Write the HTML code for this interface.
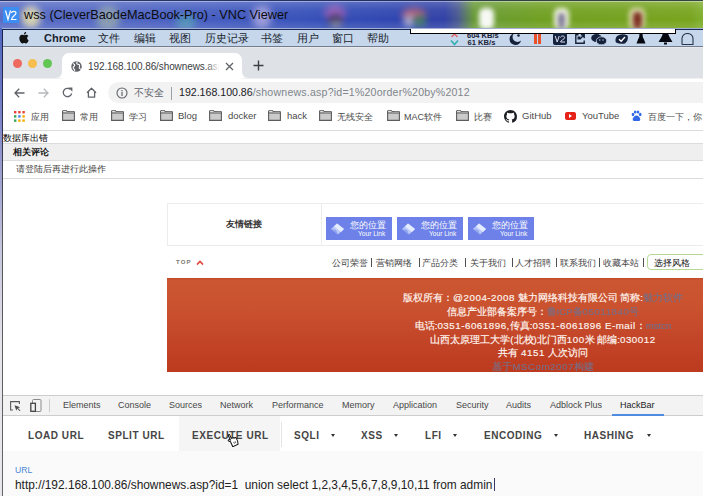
<!DOCTYPE html>
<html><head><meta charset="utf-8">
<style>
*{margin:0;padding:0;box-sizing:border-box}
html,body{width:703px;height:496px;overflow:hidden;background:#fff;font-family:"Liberation Sans",sans-serif}
div,span{white-space:nowrap}
.a{position:absolute}
#title{position:absolute;left:0;top:0;width:703px;height:28px;overflow:hidden;
 background:linear-gradient(90deg,#586cc6 0px,#5066c2 120px,#445cc0 220px,#3650b8 320px,#3046b0 400px,#3242a6 445px,#4a5a90 458px,#689a36 474px,#70a022 540px,#78a41e 690px,#80b030 703px)}
#title .hl{position:absolute;left:0;top:0;width:703px;height:28px;background:linear-gradient(180deg,rgba(255,255,255,.22) 0,rgba(255,255,255,.06) 35%,rgba(0,0,0,0) 70%,rgba(255,255,255,.12) 100%)}
.blob{position:absolute;border-radius:50%;filter:blur(3.5px)}
.menu{position:absolute;top:32px;font-size:10.5px;color:#1a1f2e}
.tl{position:absolute;width:9px;height:9px;border-radius:50%;top:59px}
.bm{position:absolute;top:110.4px;font-size:9.5px;color:#4a4a4a}
.bmc{position:absolute;top:111px;font-size:9px;color:#4a4a4a}
.fs{position:absolute;top:110px}
.fold{position:absolute;top:112px;width:12px;height:9px;border:1px solid #5e5e5e;border-radius:1px;background:#cfcfcf}
.fold:before{content:"";position:absolute;left:-1px;top:-3px;width:5px;height:3px;border:1px solid #5e5e5e;border-bottom:none;border-radius:1px 1px 0 0;background:#cfcfcf}
.fold:after{content:"";position:absolute;left:0;top:0;width:10px;height:1.5px;background:#eee}
.nav{position:absolute;top:257px;font-size:9px;color:#444}
.sep{position:absolute;top:258px;width:1px;height:9px;background:#505050}
.ft{position:absolute;font-size:9.6px;color:#fff6f0;font-weight:normal;letter-spacing:0px;-webkit-text-stroke-width:.18px}
.d{letter-spacing:.5px;font-weight:normal;font-size:9.8px;-webkit-text-stroke-width:.15px}
.g{color:#7a6e84;filter:blur(.7px)}
.dt{position:absolute;top:400px;font-size:9px;color:#474747}
.hb{position:absolute;top:429.5px;font-size:10px;font-weight:bold;color:#454545;letter-spacing:.55px}
.car{position:absolute;top:434px;width:0;height:0;border-left:2.5px solid transparent;border-right:2.5px solid transparent;border-top:3px solid #333}
.lk{position:absolute;top:217px;width:66px;height:23px;background:#6d81e8}
.lk .t1{position:absolute;left:24px;top:1.8px;font-size:9px;color:#fff}
.lk .t2{position:absolute;left:32px;top:12.5px;font-size:6.6px;color:#fff}
.lk svg{position:absolute;left:4px;top:5px}
</style></head><body>

<!-- Title bar -->
<div id="title">
 <div class="blob" style="left:21px;top:6px;width:20px;height:22px;background:rgba(245,235,170,.8)"></div>
 <div class="blob" style="left:96px;top:6px;width:24px;height:24px;background:rgba(200,215,150,.45)"></div>
 <div class="blob" style="left:176px;top:14px;width:20px;height:16px;background:rgba(90,200,170,.45)"></div>
 <div class="blob" style="left:252px;top:6px;width:20px;height:22px;background:rgba(230,210,240,.55)"></div>
 <div class="blob" style="left:324px;top:5px;width:22px;height:16px;background:rgba(210,100,180,.55)"></div>
 <div class="blob" style="left:329px;top:15px;width:13px;height:12px;background:rgba(20,20,30,.7)"></div>
 <div class="blob" style="left:330px;top:20px;width:12px;height:8px;background:rgba(230,230,230,.5)"></div>
 <div class="blob" style="left:402px;top:8px;width:24px;height:12px;background:rgba(220,100,100,.7)"></div>
 <div class="blob" style="left:404px;top:15px;width:10px;height:12px;background:rgba(230,230,230,.7)"></div>
 <div class="blob" style="left:414px;top:15px;width:12px;height:12px;background:rgba(60,150,70,.7)"></div>
 <div class="blob" style="left:479px;top:8px;width:15px;height:21px;border-radius:30%;background:rgba(255,255,255,.95);filter:blur(2.5px)"></div>
 <div class="blob" style="left:554px;top:8px;width:15px;height:21px;border-radius:30%;background:rgba(245,245,235,.95);filter:blur(2.5px)"></div>
 <div class="blob" style="left:558px;top:13px;width:7px;height:16px;border-radius:30%;background:rgba(110,105,140,.85);filter:blur(2px)"></div>
 <div class="blob" style="left:629px;top:8px;width:16px;height:21px;border-radius:30%;background:rgba(235,225,190,.85);filter:blur(2.5px)"></div>
 <div class="blob" style="left:633px;top:12px;width:9px;height:17px;border-radius:30%;background:rgba(120,40,25,.95);filter:blur(2px)"></div>
 <div class="hl"></div>
 <div style="position:absolute;left:0;top:0;width:703px;height:1px;background:rgba(10,20,60,.7)"></div><div style="position:absolute;left:0;top:1px;width:703px;height:1px;background:rgba(255,255,255,.4)"></div>
 <svg style="position:absolute;left:3px;top:7px" width="16" height="16" viewBox="0 0 16 16"><rect width="16" height="16" fill="#3d8ef2"/><path d="M2.5 3.5L5 12.5 7.5 3.5M8.5 6c0-2 4.5-2.5 4.5 0 0 2.5-4.5 3-4.5 6.5h5" stroke="#fff" stroke-width="1.2" fill="none"/></svg>
 <div class="a" style="left:24px;top:7.5px;font-size:12.7px;color:#0c0c10">wss (CleverBaodeMacBook-Pro) - VNC Viewer</div>
</div>
<!-- frame -->
<div style="position:absolute;left:0;top:28px;width:2px;height:468px;background:linear-gradient(180deg,#5068c0 0,#6a78c4 60px,#9498cc 130px,#c4c4dc 220px,#e4e4ea 320px,#e8e8ec 468px)"></div>
<div style="position:absolute;left:2px;top:28px;width:1px;height:468px;background:linear-gradient(180deg,#1a2050 0,#303048 100px,#555 200px,#666 468px)"></div>
<div style="position:absolute;left:2px;top:28px;width:701px;height:1px;background:#a4b0d4"></div><div style="position:absolute;left:2px;top:29px;width:701px;height:1px;background:#1a2a58"></div>

<!-- Mac menu bar -->
<div style="position:absolute;left:3px;top:30px;width:700px;height:17px;background:#c6d7ec;border-bottom:1px solid #707c92"></div>
<svg style="position:absolute;left:19px;top:32px" width="10" height="12" viewBox="0 0 170 200"><path fill="#111" d="M150 170c-8 12-17 24-30 24s-17-8-32-8-20 8-32 8-22-13-30-25C9 145-3 100 14 70c8-15 24-24 41-24 13 0 25 9 33 9s21-10 36-9c6 0 24 2 35 19-1 1-21 12-21 37 0 29 26 39 26 39-1 1-4 14-14 29zM112 26c7-8 11-19 10-30-10 0-22 7-29 15-6 7-12 18-10 29 11 1 22-6 29-14z"/></svg>
<div class="a" style="left:44px;top:32px;font-size:11px;font-weight:bold;color:#1a1f2e">Chrome</div>
<div class="menu" style="left:98px">文件</div>
<div class="menu" style="left:134px">编辑</div>
<div class="menu" style="left:169px">视图</div>
<div class="menu" style="left:205px">历史记录</div>
<div class="menu" style="left:261px">书签</div>
<div class="menu" style="left:297px">用户</div>
<div class="menu" style="left:332px">窗口</div>
<div class="menu" style="left:367px">帮助</div>
<svg style="position:absolute;left:450px;top:32px" width="9" height="14" viewBox="0 0 9 14"><path d="M1.5 5L4.5 2 7.5 5" stroke="#e06060" stroke-width="1.3" fill="none"/><path d="M1 8.5L4.5 12.5 8 8.5" stroke="#30b0b0" stroke-width="1.6" fill="none"/></svg>
<div class="a" style="left:467px;top:31px;font-size:7.5px;font-weight:bold;color:#1a2438">604 KB/s</div>
<div class="a" style="left:467.5px;top:38px;font-size:7.6px;font-weight:bold;color:#1a2438">61 KB/s</div>
<div style="position:absolute;left:410px;top:29px;width:266px;height:4.5px;background:#fff;border:1px solid #000;border-top:none"></div>
<svg style="position:absolute;left:508px;top:33px" width="14" height="12" viewBox="0 0 14 12"><path d="M6 0.5A5.8 5.8 0 1 0 13 7.5 4.5 4.5 0 0 1 6 0.5z" fill="#15203a"/><circle cx="10.5" cy="2.5" r="1.3" fill="#15203a"/></svg>
<div style="position:absolute;left:534px;top:34px;width:2.5px;height:10px;background:#e8502a"></div>
<div style="position:absolute;left:538px;top:34px;width:2.5px;height:10px;background:#e8502a"></div>
<svg style="position:absolute;left:553px;top:33px" width="14" height="12" viewBox="0 0 14 12"><rect width="14" height="12" rx="2" fill="#15233f"/><path d="M2.2 3L4.2 9 6.2 3M7.6 4.5C7.6 2.6 11.6 2.4 11.6 4.6 11.6 6.5 7.6 7 7.6 9H12" stroke="#dde" stroke-width="1" fill="none"/></svg>
<svg style="position:absolute;left:575px;top:34px" width="10" height="10" viewBox="0 0 10 10"><path d="M3.5 0.8H0.8V9.2H9.2V6.5M5 5L9.2 0.8M5.8 0.8H9.2V4.2" stroke="#15203a" stroke-width="1.4" fill="none"/><rect x="2.5" y="2.5" width="3" height="3" fill="#15203a"/></svg>
<svg style="position:absolute;left:591px;top:34px" width="16" height="11" viewBox="0 0 16 11"><ellipse cx="5.5" cy="4" rx="5.3" ry="4" fill="#15203a"/><ellipse cx="10.5" cy="6.8" rx="5.2" ry="4" fill="#15203a" stroke="#c6d7ec" stroke-width=".8"/><circle cx="8.8" cy="6" r=".7" fill="#c6d7ec"/><circle cx="12" cy="6" r=".7" fill="#c6d7ec"/></svg>
<svg style="position:absolute;left:615px;top:34px" width="14" height="10" viewBox="0 0 14 10"><path d="M2 2Q7 -1 12.5 1.5 14 6 10 9.5Q5 10.5 1 8.5 -0.5 5 2 2z" fill="#15203a"/><path d="M4 5.3L6.2 7.3 10 3" stroke="#fff" stroke-width="1.4" fill="none"/></svg>
<svg style="position:absolute;left:636px;top:33px" width="10" height="11" viewBox="0 0 10 11"><path d="M3.5 0.5H6.5L6.8 4 8 6.5 9.5 10.5H0.5L2 6.5 3.2 4z" fill="#050810"/></svg>
<svg style="position:absolute;left:658px;top:33px" width="15" height="12" viewBox="0 0 15 12"><path d="M5 0.5H10L11.5 4 14.5 9H0.5L3.5 4z" fill="#050810"/><rect x="6" y="9.5" width="3" height="2" fill="#050810"/></svg>
<svg style="position:absolute;left:681px;top:33px" width="13" height="12" viewBox="0 0 13 12"><path d="M1 11.5V5.5A5.5 5 0 0 1 12 5.5V11.5H1" stroke="#2a3348" stroke-width="1.1" fill="none"/></svg>

<!-- Chrome tab strip -->
<div style="position:absolute;left:3px;top:47px;width:700px;height:31px;background:#dee1e6;border-top:1px solid #e9e9ec"></div>
<div class="tl" style="left:13px;background:#ee6a5f"></div>
<div class="tl" style="left:28px;background:#f5be4f"></div>
<div class="tl" style="left:43px;background:#62c655"></div>
<div style="position:absolute;left:62px;top:53px;width:180px;height:26px;background:#fff;border-radius:7px 7px 0 0"></div>
<div style="position:absolute;left:56px;top:72px;width:6px;height:7px;background:#fff"></div><div style="position:absolute;left:50px;top:66px;width:12px;height:12px;border-radius:50%;background:#dee1e6"></div>
<div style="position:absolute;left:242px;top:72px;width:6px;height:7px;background:#fff"></div><div style="position:absolute;left:242px;top:66px;width:12px;height:12px;border-radius:50%;background:#dee1e6"></div>
<svg style="position:absolute;left:71px;top:61px" width="11" height="11" viewBox="0 0 12 12"><circle cx="6" cy="6" r="5.7" fill="#5f6368"/><path d="M2.2 2.8c1.3.6 2.3 1.3 1.8 2.4s-2 .8-1.6 2.2 1.6 1.3 1.7 3.4M6.8.6c-.3 1 -.9 1.6-.4 2.4s2 .2 2.8 1.3-.5 2.2-.2 3.2 1.3 1 1.8 1.5" stroke="#fff" stroke-width="1.2" fill="none"/></svg>
<div style="position:absolute;left:88px;top:58px;width:134px;height:16px;overflow:hidden">
 <div class="a" style="left:0;top:2.5px;font-size:10px;letter-spacing:-0.1px;color:#3c4043">192.168.100.86/shownews.asp?id=1</div>
 <div style="position:absolute;left:118px;top:0;width:16px;height:16px;background:linear-gradient(90deg,rgba(255,255,255,0),#fff 85%)"></div>
</div>
<svg style="position:absolute;left:225px;top:62px" width="9" height="9" viewBox="0 0 9 9"><path d="M1 1L8 8M8 1L1 8" stroke="#5f6368" stroke-width="1.3"/></svg>
<svg style="position:absolute;left:253px;top:60px" width="11" height="11" viewBox="0 0 11 11"><path d="M5.5 0.5V10.5M0.5 5.5H10.5" stroke="#3c4043" stroke-width="1.4"/></svg>

<!-- toolbar -->
<div style="position:absolute;left:3px;top:78px;width:700px;height:53px;background:#fff;border-bottom:1px solid #dcdcdc"></div>
<svg style="position:absolute;left:14px;top:88px" width="11" height="10" viewBox="0 0 11 10"><path d="M10.5 5H1.2M5.2 0.8L1 5 5.2 9.2" stroke="#5f6368" stroke-width="1.3" fill="none"/></svg>
<svg style="position:absolute;left:38px;top:88px" width="11" height="10" viewBox="0 0 11 10"><path d="M0.5 5H9.8M5.8 0.8L10 5 5.8 9.2" stroke="#b5b8bc" stroke-width="1.3" fill="none"/></svg>
<svg style="position:absolute;left:62px;top:87px" width="11" height="11" viewBox="0 0 11 11"><path d="M9.6 6.3A4.2 4.2 0 1 1 8.2 2.3" stroke="#5f6368" stroke-width="1.3" fill="none"/><path d="M6.3 0.6H10.4V4.7z" fill="#5f6368"/></svg>
<svg style="position:absolute;left:86px;top:87px" width="11" height="11" viewBox="0 0 11 11"><path d="M1 5.8L5.5 1.2 10 5.8M2.4 4.5V10.2H8.6V4.5" stroke="#5f6368" stroke-width="1.3" fill="none" stroke-linejoin="round"/></svg>
<div style="position:absolute;left:3px;top:78px;width:59px;height:1px;background:#eef0f2"></div><div style="position:absolute;left:242px;top:78px;width:461px;height:1px;background:#eef0f2"></div><div style="position:absolute;left:108px;top:82px;width:620px;height:21px;background:#f2f2f3;border-radius:11px"></div>
<svg style="position:absolute;left:116px;top:87px" width="12" height="12" viewBox="0 0 12 12"><circle cx="6" cy="6" r="5" stroke="#5f6368" stroke-width="1.1" fill="none"/><path d="M6 5v4M6 3v1.2" stroke="#5f6368" stroke-width="1.2"/></svg>
<div class="a" style="left:134px;top:86px;font-size:10px;color:#5f6368">不安全</div>
<div style="position:absolute;left:171px;top:87px;width:1px;height:13px;background:#9aa0a6"></div>
<div class="a" style="left:179px;top:85.5px;font-size:10.6px;color:#80868b"><span style="color:#202124">192.168.100.86</span><span style="letter-spacing:.2px">/shownews.asp?id=1%20order%20by%2012</span></div>

<!-- bookmarks -->
<svg style="position:absolute;left:14px;top:111px" width="11" height="11" viewBox="0 0 11 11">
<rect x="0" y="0" width="2.4" height="2.4" fill="#e94235"/><rect x="4.2" y="0" width="2.4" height="2.4" fill="#e94235"/><rect x="8.4" y="0" width="2.4" height="2.4" fill="#e94235"/>
<rect x="0" y="4.2" width="2.4" height="2.4" fill="#34a853"/><rect x="4.2" y="4.2" width="2.4" height="2.4" fill="#4285f4"/><rect x="8.4" y="4.2" width="2.4" height="2.4" fill="#f9ab00"/>
<rect x="0" y="8.4" width="2.4" height="2.4" fill="#34a853"/><rect x="4.2" y="8.4" width="2.4" height="2.4" fill="#f9ab00"/><rect x="8.4" y="8.4" width="2.4" height="2.4" fill="#f9ab00"/>
</svg>
<div class="bmc" style="left:31px">应用</div>
<svg class="fs" style="left:62px" width="13" height="11" viewBox="0 0 13 11"><path d="M0.6 10.4V1.3Q0.6 0.6 1.3 0.6H4.2L5.2 1.6H11.7Q12.4 1.6 12.4 2.3V10.4Z" fill="#cbcbcb" stroke="#5c5c5c" stroke-width="1.1"/><path d="M1.2 1.3H4L5 2.3H11.8" stroke="#f2f2f2" stroke-width="1"/><path d="M0.6 3H12.4" stroke="#5c5c5c" stroke-width="1"/></svg><div class="bmc" style="left:80px">常用</div>
<svg class="fs" style="left:111px" width="13" height="11" viewBox="0 0 13 11"><path d="M0.6 10.4V1.3Q0.6 0.6 1.3 0.6H4.2L5.2 1.6H11.7Q12.4 1.6 12.4 2.3V10.4Z" fill="#cbcbcb" stroke="#5c5c5c" stroke-width="1.1"/><path d="M1.2 1.3H4L5 2.3H11.8" stroke="#f2f2f2" stroke-width="1"/><path d="M0.6 3H12.4" stroke="#5c5c5c" stroke-width="1"/></svg><div class="bmc" style="left:129px">学习</div>
<svg class="fs" style="left:160px" width="13" height="11" viewBox="0 0 13 11"><path d="M0.6 10.4V1.3Q0.6 0.6 1.3 0.6H4.2L5.2 1.6H11.7Q12.4 1.6 12.4 2.3V10.4Z" fill="#cbcbcb" stroke="#5c5c5c" stroke-width="1.1"/><path d="M1.2 1.3H4L5 2.3H11.8" stroke="#f2f2f2" stroke-width="1"/><path d="M0.6 3H12.4" stroke="#5c5c5c" stroke-width="1"/></svg><div class="bm" style="left:178px">Blog</div>
<svg class="fs" style="left:209px" width="13" height="11" viewBox="0 0 13 11"><path d="M0.6 10.4V1.3Q0.6 0.6 1.3 0.6H4.2L5.2 1.6H11.7Q12.4 1.6 12.4 2.3V10.4Z" fill="#cbcbcb" stroke="#5c5c5c" stroke-width="1.1"/><path d="M1.2 1.3H4L5 2.3H11.8" stroke="#f2f2f2" stroke-width="1"/><path d="M0.6 3H12.4" stroke="#5c5c5c" stroke-width="1"/></svg><div class="bm" style="left:228px">docker</div>
<svg class="fs" style="left:268px" width="13" height="11" viewBox="0 0 13 11"><path d="M0.6 10.4V1.3Q0.6 0.6 1.3 0.6H4.2L5.2 1.6H11.7Q12.4 1.6 12.4 2.3V10.4Z" fill="#cbcbcb" stroke="#5c5c5c" stroke-width="1.1"/><path d="M1.2 1.3H4L5 2.3H11.8" stroke="#f2f2f2" stroke-width="1"/><path d="M0.6 3H12.4" stroke="#5c5c5c" stroke-width="1"/></svg><div class="bm" style="left:287px">hack</div>
<svg class="fs" style="left:319px" width="13" height="11" viewBox="0 0 13 11"><path d="M0.6 10.4V1.3Q0.6 0.6 1.3 0.6H4.2L5.2 1.6H11.7Q12.4 1.6 12.4 2.3V10.4Z" fill="#cbcbcb" stroke="#5c5c5c" stroke-width="1.1"/><path d="M1.2 1.3H4L5 2.3H11.8" stroke="#f2f2f2" stroke-width="1"/><path d="M0.6 3H12.4" stroke="#5c5c5c" stroke-width="1"/></svg><div class="bmc" style="left:337px">无线安全</div>
<svg class="fs" style="left:387px" width="13" height="11" viewBox="0 0 13 11"><path d="M0.6 10.4V1.3Q0.6 0.6 1.3 0.6H4.2L5.2 1.6H11.7Q12.4 1.6 12.4 2.3V10.4Z" fill="#cbcbcb" stroke="#5c5c5c" stroke-width="1.1"/><path d="M1.2 1.3H4L5 2.3H11.8" stroke="#f2f2f2" stroke-width="1"/><path d="M0.6 3H12.4" stroke="#5c5c5c" stroke-width="1"/></svg><div class="bmc" style="left:404px">MAC软件</div>
<svg class="fs" style="left:456px" width="13" height="11" viewBox="0 0 13 11"><path d="M0.6 10.4V1.3Q0.6 0.6 1.3 0.6H4.2L5.2 1.6H11.7Q12.4 1.6 12.4 2.3V10.4Z" fill="#cbcbcb" stroke="#5c5c5c" stroke-width="1.1"/><path d="M1.2 1.3H4L5 2.3H11.8" stroke="#f2f2f2" stroke-width="1"/><path d="M0.6 3H12.4" stroke="#5c5c5c" stroke-width="1"/></svg><div class="bmc" style="left:474px">比赛</div>
<svg style="position:absolute;left:504px;top:110px" width="13" height="13" viewBox="0 0 16 16"><path fill="#1b1f23" d="M8 0C3.58 0 0 3.58 0 8c0 3.54 2.29 6.53 5.47 7.59.4.07.55-.17.55-.38 0-.19-.01-.82-.01-1.49-2.01.37-2.53-.49-2.69-.94-.09-.23-.48-.94-.82-1.13-.28-.15-.68-.52-.01-.53.63-.01 1.08.58 1.23.82.72 1.21 1.870.87 2.33.66.07-.52.28-.87.51-1.07-1.78-.2-3.640-.89-3.640-3.95 0-.87.31-1.59.82-2.15-.08-.2-.36-1.02.08-2.12 0 0 .67-.21 2.2.82.64-.18 1.32-.27 2-.27.68 0 1.36.09 2 .27 1.53-1.04 2.2-.82 2.2-.82.44 1.1.16 1.92.08 2.12.51.56.82 1.27.82 2.15 0 3.070-1.870 3.75-3.650 3.950.29.25.54.73.54 1.48 0 1.07-.01 1.93-.01 2.20 0 .21.15.46.55.38A8.013 8.013 0 0016 8c0-4.42-3.58-8-8-8z"/></svg>
<div class="bm" style="left:522px">GitHub</div>
<div style="position:absolute;left:565px;top:112px;width:11px;height:8px;background:#e62117;border-radius:2px"></div>
<div style="position:absolute;left:569px;top:114px;width:0;height:0;border-top:2px solid transparent;border-bottom:2px solid transparent;border-left:3.5px solid #fff"></div>
<div class="bm" style="left:582px">YouTube</div>
<svg style="position:absolute;left:631px;top:110px" width="11" height="12" viewBox="0 0 11 12"><ellipse cx="2" cy="4.5" rx="1.3" ry="1.7" fill="#3068e8"/><ellipse cx="4.2" cy="2" rx="1.3" ry="1.6" fill="#3068e8"/><ellipse cx="7" cy="2" rx="1.3" ry="1.6" fill="#3068e8"/><ellipse cx="9.2" cy="4.5" rx="1.3" ry="1.7" fill="#3068e8"/><path d="M5.5 5.5c-2 0-3.8 2.5-3.8 4 0 1.5 1.5 1.8 3.8 1.5 2.3.3 3.8 0 3.8-1.5 0-1.5-1.8-4-3.8-4z" fill="#3068e8"/></svg>
<div class="bmc" style="left:648px">百度一下，你</div>

<!-- page -->
<div class="a" style="left:3px;top:132.5px;font-size:8.6px;font-weight:500;color:#000">数据库出错</div>
<div style="position:absolute;left:3px;top:143px;width:700px;height:18px;background:#efefef;border-top:1px solid #dcdcdc;border-bottom:1px solid #dcdcdc"></div>
<div class="a" style="left:13px;top:147px;font-size:8.7px;font-weight:bold;color:#111">相关评论</div>
<div class="a" style="left:16px;top:164px;font-size:8.6px;color:#444">请登陆后再进行此操作</div>
<div style="position:absolute;left:3px;top:178px;width:700px;height:1px;background:#dcdcdc"></div>

<div style="position:absolute;left:167px;top:203px;width:540px;height:43px;border:1px solid #ececec"></div>
<div style="position:absolute;left:321px;top:204px;width:1px;height:41px;background:#ececec"></div>
<div class="a" style="left:226px;top:218.5px;font-size:8.7px;font-weight:bold;color:#333">友情链接</div>
<div class="lk" style="left:326px"><svg width="16" height="14" viewBox="0 0 16 14"><path d="M1 7L7 1.5 14 7 8 12.5z" fill="#b9c8f8"/><path d="M4 4.5L7 1.5 14 7 11 10z" fill="#e6ecff"/><path d="M1 7L8 12.5 6 8z" fill="#8ea2ee"/></svg><div class="t1">您的位置</div><div class="t2">Your Link</div></div>
<div class="lk" style="left:397px"><svg width="16" height="14" viewBox="0 0 16 14"><path d="M1 7L7 1.5 14 7 8 12.5z" fill="#b9c8f8"/><path d="M4 4.5L7 1.5 14 7 11 10z" fill="#e6ecff"/><path d="M1 7L8 12.5 6 8z" fill="#8ea2ee"/></svg><div class="t1">您的位置</div><div class="t2">Your Link</div></div>
<div class="lk" style="left:468px"><svg width="16" height="14" viewBox="0 0 16 14"><path d="M1 7L7 1.5 14 7 8 12.5z" fill="#b9c8f8"/><path d="M4 4.5L7 1.5 14 7 11 10z" fill="#e6ecff"/><path d="M1 7L8 12.5 6 8z" fill="#8ea2ee"/></svg><div class="t1">您的位置</div><div class="t2">Your Link</div></div>

<div class="a" style="left:176px;top:258.5px;font-size:6px;font-weight:bold;color:#7a7a72;letter-spacing:1.2px">TOP</div>
<svg style="position:absolute;left:196px;top:260px" width="8" height="5" viewBox="0 0 8 5"><path d="M1 4.5L4 1.5 7 4.5" stroke="#e0463a" stroke-width="1.7" fill="none"/></svg>
<div class="nav" style="left:332px">公司荣誉</div><div class="sep" style="left:371px"></div>
<div class="nav" style="left:375.5px">营销网络</div><div class="sep" style="left:418.5px"></div>
<div class="nav" style="left:422.4px">产品分类</div><div class="sep" style="left:464.5px"></div>
<div class="nav" style="left:469.5px">关于我们</div><div class="sep" style="left:511.5px"></div>
<div class="nav" style="left:515.4px">人才招聘</div><div class="sep" style="left:555.5px"></div>
<div class="nav" style="left:560px">联系我们</div><div class="sep" style="left:599px"></div>
<div class="nav" style="left:603.2px">收藏本站</div><div class="sep" style="left:643px"></div>
<div style="position:absolute;left:647px;top:254px;width:70px;height:16px;border:1px solid #b5d895;border-radius:4px;background:#fff"></div>
<div class="a" style="left:654px;top:257px;font-size:9px;font-weight:500;color:#111">选择风格</div>

<div style="position:absolute;left:167px;top:278px;width:540px;height:94px;background:linear-gradient(180deg,#bf4628 0,#cc5632 2px,#ca522f 30%,#c4472a 60%,#bc3a1e 100%)"></div>
<div class="ft" style="left:167px;width:752px;text-align:center;top:292px">版权所有：<span class="d">@2004-2008</span> 魅力网络科技有限公司 简称:<span class="g">魅力软件</span></div>
<div class="ft" style="left:167px;width:752px;text-align:center;top:306px">信息产业部备案序号：<span class="g">鲁ICP备<span class="d">05011840</span>号</span></div>
<div class="ft" style="left:167px;width:752px;text-align:center;top:320px">电话:<span class="d">0351-6061896,</span>传真:<span class="d">0351-6061896 E-mail</span>：<span class="g">mstcn</span></div>
<div class="ft" style="left:167px;width:752px;text-align:center;top:333.5px">山西太原理工大学(北校)北门西<span class="d">100</span>米 邮编:<span class="d">030012</span></div>
<div class="ft" style="left:167px;width:752px;text-align:center;top:347px">共有 <span class="d">4151</span> 人次访问</div>
<div class="ft" style="left:167px;width:752px;text-align:center;top:360.5px"><span class="g">基于<span class="d">MSCom2007</span>构建</span></div>

<!-- devtools -->
<div style="position:absolute;left:3px;top:395px;width:700px;height:21px;background:#f3f3f3;border-top:1px solid #cdcdcd;border-bottom:1px solid #cdcdcd"></div>
<svg style="position:absolute;left:10px;top:401px" width="11" height="10" viewBox="0 0 11 10"><path d="M3 9H0.6V0.6H9.4V3" stroke="#5a5a5a" stroke-width="1.1" fill="none"/><path d="M4.5 4.2L10.2 6.2 8 7 10.5 9.5 9.5 10 7.2 7.6 6.3 9.8z" fill="#4a4a4a"/></svg>
<svg style="position:absolute;left:30px;top:399px" width="12" height="13" viewBox="0 0 12 13"><rect x="2.5" y="0.5" width="8.5" height="12" rx="1" stroke="#8a8a8a" fill="none"/><rect x="0.8" y="4.3" width="4.6" height="8" stroke="#444" stroke-width="1.3" fill="#f3f3f3"/></svg>
<div style="position:absolute;left:49px;top:399px;width:1px;height:13px;background:#ccc"></div>
<div class="dt" style="left:63px">Elements</div>
<div class="dt" style="left:118px">Console</div>
<div class="dt" style="left:169px">Sources</div>
<div class="dt" style="left:220px">Network</div>
<div class="dt" style="left:272px">Performance</div>
<div class="dt" style="left:342px">Memory</div>
<div class="dt" style="left:393px">Application</div>
<div class="dt" style="left:456px">Security</div>
<div class="dt" style="left:506px">Audits</div>
<div class="dt" style="left:550px">Adblock Plus</div>
<div class="dt" style="left:620px;color:#222">HackBar</div>
<div style="position:absolute;left:612px;top:414px;width:52px;height:2px;background:#4d8ce0"></div>

<div style="position:absolute;left:179px;top:416px;width:101px;height:35px;background:#f5f5f5"></div>
<div style="position:absolute;left:281px;top:422px;width:1px;height:25px;background:#e4e4e4"></div>
<div class="hb" style="left:28px">LOAD URL</div>
<div class="hb" style="left:108px">SPLIT URL</div>
<div class="hb" style="left:192px">EXECUTE URL</div>
<div class="hb" style="left:294px">SQLI</div><div class="car" style="left:331px"></div>
<div class="hb" style="left:361px">XSS</div><div class="car" style="left:394px"></div>
<div class="hb" style="left:425px">LFI</div><div class="car" style="left:453px"></div>
<div class="hb" style="left:484px">ENCODING</div><div class="car" style="left:554px"></div>
<div class="hb" style="left:584px">HASHING</div><div class="car" style="left:647px"></div>
<svg style="position:absolute;left:226px;top:432px" width="14" height="15" viewBox="0 0 14 15"><g transform="rotate(-25 7 8)"><path d="M4 14V8.5L2.6 7.2C2 6.5 2.8 5.6 3.6 6.2L4.6 7V2C4.6 1.1 6.2 1.1 6.2 2V6.2C6.2 5.4 7.7 5.4 7.7 6.2V6.8C7.7 6 9.2 6 9.2 6.8V7.4C9.2 6.7 10.7 6.7 10.7 7.4V11L9.8 14z" fill="#fff" stroke="#111" stroke-width="1"/><path d="M6.8 10V12M8.3 10V12" stroke="#111" stroke-width=".6"/></g></svg>

<div style="position:absolute;left:3px;top:451px;width:700px;height:45px;background:#fafafa"></div>
<div class="a" style="left:15px;top:464.5px;font-size:8.6px;color:#4a86d6">URL</div>
<div class="a" style="left:15px;top:477.5px;font-size:11.9px;color:#222">http://192.168.100.86/shownews.asp?id=1&nbsp; union select 1,2,3,4,5,6,7,8,9,10,11 from admin</div>
<div style="position:absolute;left:494px;top:478px;width:1px;height:13px;background:#3a3a60"></div>
</body></html>
